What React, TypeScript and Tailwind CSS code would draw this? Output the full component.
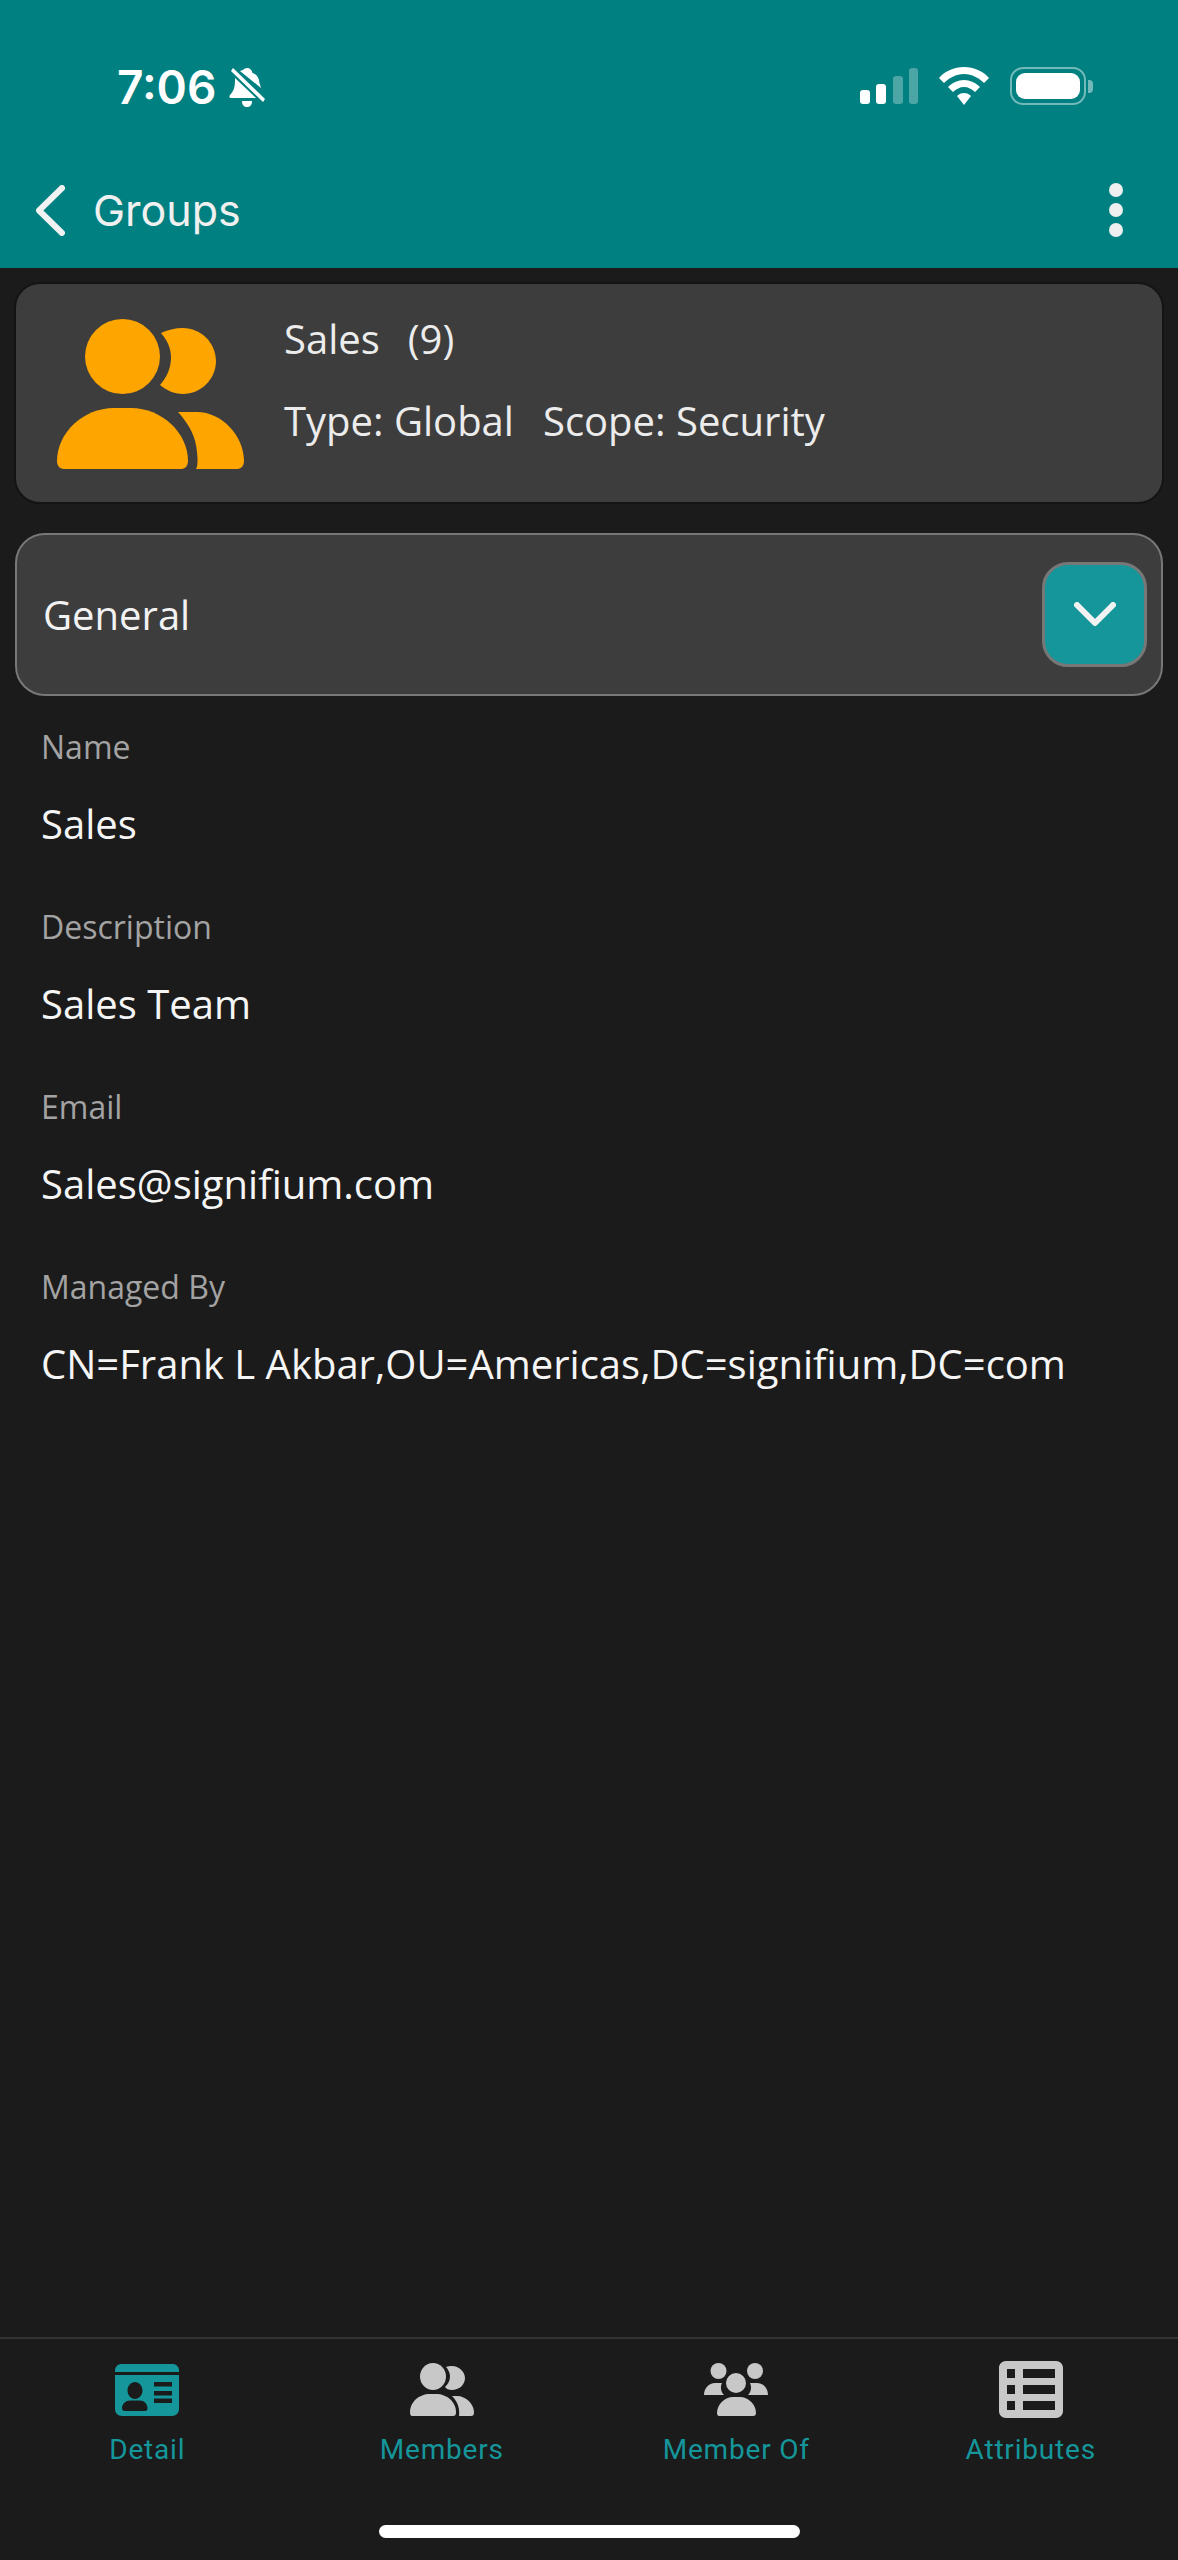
const fields = [
  { label: "Name", value: "Sales" },
  { label: "Description", value: "Sales Team" },
  { label: "Email", value: "Sales@signifium.com" },
  { label: "Managed By", value: "CN=Frank L Akbar,OU=Americas,DC=signifium,DC=com" },
];

const MembersIcon = ({ className }: { className: string }) => (
  <svg viewBox="0 0 187 150" className={className} fill="currentColor">
    <ellipse cx="65.5" cy="37.5" rx="37.5" ry="37.5" />
    <path d="M104 14C110 11 118 9 126 9C144 9 159 24 159 42C159 60 144 75 126 75C117 75 109 71 103 66C110 58 114 49 114 38C114 29 110 21 104 14Z" />
    <path d="M0 142C0 114 26 89 57 89H74C105 89 131 114 131 142C131 147 128 150 124 150H7C3 150 0 147 0 142Z" />
    <path d="M121 93H140C165 93 187 117 187 142C187 147 184 150 180 150H139C142 147 140 131 139 126C137 114 130 103 121 93Z" />
  </svg>
);

const tabs = [
  { label: "Detail", icon: "detail" },
  { label: "Members", icon: "members" },
  { label: "Member Of", icon: "memberOf" },
  { label: "Attributes", icon: "attributes" },
];

const TabIcon = ({ name }: { name: string }) => {
  if (name === "detail") {
    return (
      <svg viewBox="0 0 64 52" className="h-[52px] w-[64px] text-[#14969a]" fill="currentColor">
        <path d="M6 0H58C61 0 64 3 64 6V8H0V6C0 3 3 0 6 0Z" />
        <path fillRule="evenodd" d="M0 11H64V45C64 49 61 52 57 52H7C3 52 0 49 0 45ZM20 18C16 18 12.500 22 12.500 26.500C12.500 31 16 35 20 35C24 35 27.500 31 27.500 26.500C27.500 22 24 18 20 18ZM7 44C7 46 8 47 10 47H30C32 47 32.500 46 32.500 44C32.500 40 29 36.500 25 36.500H15C11 36.500 7 40 7 44ZM39 18V22.500H57V18ZM39 27V31.500H57V27ZM39 34.500V39H57V34.500Z" />
      </svg>
    );
  }
  if (name === "members") {
    return (
      <svg viewBox="0 0 64 53" className="h-[53px] w-[64px] text-[#c8c8c8]" fill="currentColor">
        <ellipse cx="23" cy="13.500" rx="13" ry="13.500" />
        <path d="M36 4C38 3 40 3 42 3C49 3 55 9 55 15C55 22 49 27 42 27C39 27 36 26 35 24C38 21 40 18 40 13C40 10 38 6 36 4Z" />
        <path d="M0 49C0 39 9 31 20 31H26C37 31 46 39 46 49C46 52 45 53 43 53H2C1 53 0 52 0 49Z" />
        <path d="M42 33H47C56 33 64 41 64 49C64 52 63 53 61 53H49C50 46 48 39 42 33Z" />
      </svg>
    );
  }
  if (name === "memberOf") {
    return (
      <svg viewBox="0 0 64 53" className="h-[53px] w-[64px] text-[#c8c8c8]" fill="currentColor">
        <ellipse cx="14.500" cy="8" rx="8" ry="8" />
        <ellipse cx="51" cy="8" rx="8" ry="8" />
        <path d="M0 32C0 25 5 20 11 20H18C16 24 17 29 20 32Z" />
        <path d="M64 32C64 25 59 20 53 20H46C48 24 47 29 44 32Z" />
        <ellipse cx="32" cy="20" rx="10" ry="10" />
        <path d="M13 50C13 41 21 34 29 34H36C44 34 52 41 52 50C52 52 51 53 49 53H15C14 53 13 52 13 50Z" />
      </svg>
    );
  }
  return (
    <svg viewBox="0 0 64 57" className="h-[57px] w-[64px] text-[#c8c8c8]" fill="currentColor">
      <path fillRule="evenodd" d="M7 0H57C61 0 64 3 64 7V50C64 54 61 57 57 57H7C3 57 0 54 0 50V7C0 3 3 0 7 0ZM8 8V17H16V8ZM24 8V17H56V8ZM8 24V33H16V24ZM24 24V33H56V24ZM8 40V49H16V40ZM24 40V49H56V40Z" />
    </svg>
  );
};

export default function App() {
  return (
    <div className="flex h-screen flex-col bg-[#1b1b1b] font-['Open_Sans',sans-serif] text-[#f2f2f2]">
      {/* Header */}
      <div className="h-[268px] shrink-0 bg-[#008080]">
        <div className="flex h-[167px] items-start justify-between pt-[67px] pr-[85px] pl-[117px]">
          <div className="flex items-center gap-[13px]">
            <span className="font-['Inter',sans-serif] text-[46px] leading-[41px] font-semibold text-white">7:06</span>
            <svg viewBox="0 0 37 40" className="h-[40px] w-[37px]" fill="white">
              <path d="M18 0C21 0 23 2 23.500 5C28 6.500 30 10 30.500 15L32 20L11 3C13 2 14 2 14 2C15 1 16 0 18 0Z" />
              <path d="M6 10L27 30H2C0 30 0 28 1 27C5 23 6 18 6 13Z" />
              <path d="M13 33H23C23 37 21 39 18 39C15 39 13 37 13 33Z" />
              <path d="M36 31L34 34L2 3L4 0Z" />
            </svg>
          </div>
          <div className="flex items-center">
            <svg viewBox="0 0 58 36" className="h-[36px] w-[58px]" fill="white">
              <rect x="0" y="22" width="10" height="14" rx="3" />
              <rect x="16" y="16" width="10" height="20" rx="3" />
              <rect x="33" y="8" width="10" height="28" rx="3" opacity="0.3" />
              <rect x="49" y="0" width="9" height="36" rx="3" opacity="0.3" />
            </svg>
            <svg viewBox="0 0 50 38" className="ml-[21px] h-[38px] w-[50px]" fill="white">
              <path d="M25 0C35 0 44 4 50 11L45 16C40 11 33 7 25 7C17 7 10 11 5 16L0 11C6 4 15 0 25 0Z" />
              <path d="M25 13C31 13 37 16 41 20L36 25C33 22 29 20 25 20C21 20 17 22 14 25L9 20C13 16 19 13 25 13Z" />
              <path d="M25 26C28 26 30 27 32 29L25 38L18 29C20 27 22 26 25 26Z" />
            </svg>
            <div className="ml-[21px] flex h-[38px] w-[76px] items-center justify-center rounded-[13px] border-[2px] border-white/45 p-[4px]">
              <div className="h-full w-full rounded-[9px] bg-white" />
            </div>
            <div className="ml-[2px] h-[13px] w-[5px] rounded-r-[4px] bg-white/45" />
          </div>
        </div>
        <div className="flex h-[86px] items-center justify-between pr-[55px] pl-[36px]">
          <div className="flex items-center gap-[28px]">
            <svg viewBox="0 0 29 51" className="h-[51px] w-[29px]" fill="none" stroke="#f2f2f2" strokeWidth="6" strokeLinecap="round" strokeLinejoin="round">
              <path d="M26 3L3 25.500L26 48" />
            </svg>
            <span className="font-['Inter',sans-serif] text-[43px] leading-none font-normal text-[#f0f0f0]">Groups</span>
          </div>
          <div className="flex flex-col gap-[6px]">
            <div className="h-[14px] w-[14px] rounded-full bg-[#efefef]" />
            <div className="h-[14px] w-[14px] rounded-full bg-[#efefef]" />
            <div className="h-[14px] w-[14px] rounded-full bg-[#efefef]" />
          </div>
        </div>
      </div>

      {/* Group summary card */}
      <div className="mx-[14px] mt-[14px] flex h-[222px] rounded-[26px] border-[2px] border-[#141414] bg-[#3d3d3d] pt-[35px] pl-[41px]">
        <MembersIcon className="h-[150px] w-[187px] text-[#ffa500]" />
        <div className="-mt-[9px] ml-[40px] flex flex-col gap-[24px] text-[40px] leading-[58px] font-normal whitespace-nowrap text-[#ececec]">
          <div className="flex gap-[28px]">
            <span>Sales</span>
            <span>(9)</span>
          </div>
          <div className="flex gap-[29px]">
            <span>Type: Global</span>
            <span>Scope: Security</span>
          </div>
        </div>
      </div>

      {/* Accordion header */}
      <div className="mx-[15px] mt-[29px] flex h-[163px] items-center justify-between rounded-[30px] border-[2px] border-[#787878] bg-[#3d3d3d] pr-[14px] pl-[26px]">
        <span className="text-[40px]">General</span>
        <div className="flex h-[105px] w-[105px] items-center justify-center rounded-[26px] border-[3px] border-[#777777] bg-[#14969a]">
          <svg viewBox="0 0 42 25" className="h-[25px] w-[42px]" fill="none" stroke="#f2f2f2" strokeWidth="6" strokeLinecap="round" strokeLinejoin="round">
            <path d="M3 3L21 21L39 3" />
          </svg>
        </div>
      </div>

      {/* Fields */}
      <div className="mt-[27px] flex flex-1 flex-col pl-[41px]">
        {fields.map((f) => (
          <div key={f.label} className="h-[180px]">
            <div className="h-[48px] text-[32px] leading-[48px] text-[#a3a3a3]">{f.label}</div>
            <div className="mt-[23px] h-[60px] text-[40px] leading-[60px] text-[#f5f5f5]">{f.value}</div>
          </div>
        ))}
      </div>

      {/* Bottom tabs */}
      <div className="relative h-[223px] shrink-0 border-t-[2px] border-[#333333]">
        <div className="grid h-[90px] grid-cols-4 pt-[22px]">
          {tabs.map((t) => (
            <div key={t.label} className="flex flex-col items-center">
              <div className="flex h-[57px] items-center">
                <TabIcon name={t.icon} />
              </div>
              <div className="mt-[16px] font-['Roboto',sans-serif] text-[28px] leading-[32px] tracking-[0.8px] whitespace-nowrap text-[#14969a]">
                {t.label}
              </div>
            </div>
          ))}
        </div>
        <div className="absolute bottom-[22px] left-[379px] h-[13px] w-[421px] rounded-full bg-white" />
      </div>
    </div>
  );
}
